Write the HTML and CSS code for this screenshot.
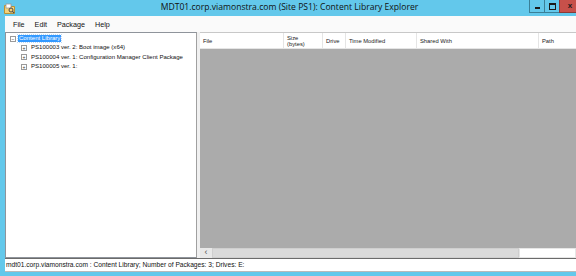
FILE: index.html
```html
<!DOCTYPE html>
<html>
<head>
<meta charset="utf-8">
<link rel="stylesheet" href="styles.css">
</head>
<body>
<div class="window">
  <div class="titlebar">
    <div class="appicon">
      <svg width="11" height="11" viewBox="0 0 11 11">
        <path d="M0.5 2.5 H4 L5 3.5 H10.5 V10.5 H0.5 Z" fill="#f3d27a" stroke="#b89236" stroke-width="1"/>
        <rect x="2" y="1" width="5" height="4" fill="#fff" stroke="#9a9a9a" stroke-width="0.8"/>
        <circle cx="7" cy="7" r="2" fill="none" stroke="#4a4a4a" stroke-width="1"/>
        <path d="M8.4 8.4 L10.2 10.2" stroke="#4a4a4a" stroke-width="1.2"/>
      </svg>
    </div>
    <div class="title">MDT01.corp.viamonstra.com (Site PS1): Content Library Explorer</div>
    <div class="caption-buttons">
      <div class="cbtn"><span class="min-glyph"></span></div>
      <div class="cbtn"><span class="max-glyph"></span></div>
      <div class="cbtn close"><span class="x-glyph">x</span></div>
    </div>
  </div>
  <div class="client">
    <div class="menubar">
      <span class="menu">File</span>
      <span class="menu">Edit</span>
      <span class="menu">Package</span>
      <span class="menu">Help</span>
    </div>
    <div class="main">
      <div class="tree">
        <div class="node root">
          <span class="exp">−</span><span class="label selected">Content Library</span>
        </div>
        <div class="node child">
          <span class="exp">+</span><span class="label">PS100003 ver. 2: Boot image (x64)</span>
        </div>
        <div class="node child">
          <span class="exp">+</span><span class="label">PS100004 ver. 1: Configuration Manager Client Package</span>
        </div>
        <div class="node child">
          <span class="exp">+</span><span class="label">PS100005 ver. 1:</span>
        </div>
      </div>
      <div class="splitter"></div>
      <div class="list">
        <div class="header">
          <div class="col c-file">File</div>
          <div class="col c-size">Size<br>(bytes)</div>
          <div class="col c-drive">Drive</div>
          <div class="col c-time">Time Modified</div>
          <div class="col c-shared">Shared With</div>
          <div class="col c-path">Path</div>
        </div>
        <div class="listbody"></div>
        <div class="hscroll">
          <div class="arrow">&lsaquo;</div>
          <div class="track"></div>
          <div class="rest"></div>
        </div>
      </div>
    </div>
    <div class="statusbar">mdt01.corp.viamonstra.com : Content Library; Number of Packages: 3; Drives: E:</div>
  </div>
</div>
</body>
</html>
```
FILE: styles.css
```css
html, body {
  margin: 0;
  padding: 0;
  width: 576px;
  height: 276px;
  overflow: hidden;
}
.window {
  width: 576px;
  height: 276px;
  background: #63c8eb;
  display: flex;
  flex-direction: column;
  padding-bottom: 4px;
  box-sizing: border-box;
  font-family: "Liberation Sans", Arial, sans-serif;
}
.titlebar {
  height: 16px;
  display: flex;
  align-items: flex-start;
  position: relative;
}
.appicon {
  width: 11px;
  height: 11px;
  margin: 3px 0 0 4px;
}
.appicon svg { display: block; }
.title {
  position: absolute;
  left: 0;
  right: 0;
  top: 2px;
  text-align: center;
  font-family: "Open Sans", "Noto Sans", sans-serif;
  font-size: 8.6px;
  line-height: 11px;
  color: #111;
  padding-left: 3px;
}
.caption-buttons {
  margin-left: auto;
  display: flex;
  height: 13px;
  position: relative;
  z-index: 1;
}
.cbtn {
  width: 15px;
  height: 13px;
  border-left: 1px solid #3a7f97;
  border-bottom: 1px solid #3a7f97;
  box-sizing: border-box;
  display: flex;
  align-items: center;
  justify-content: center;
}
.cbtn.close {
  width: 17px;
  background: #c7504a;
  border-color: #8b3a36;
}
.min-glyph {
  width: 5px;
  height: 2px;
  background: #1a1a1a;
  margin-top: 3px;
}
.max-glyph {
  width: 5px;
  height: 4px;
  border: 1px solid #1a1a1a;
  border-top-width: 2px;
}
.x-glyph {
  font-size: 8px;
  font-weight: bold;
  color: #1a1a1a;
  line-height: 8px;
  margin-left: 4px;
}
.client {
  flex: 1;
  margin-left: 5px;
  display: flex;
  flex-direction: column;
  background: #f0f0f0;
  min-height: 0;
}
.menubar {
  height: 16px;
  background: #fafafa;
  display: flex;
  align-items: center;
  padding-left: 8px;
  font-size: 7.2px;
  color: #111;
  box-sizing: border-box;
  padding-top: 1px;
}
.menu { margin-right: 10px; }
.main {
  flex: 1;
  display: flex;
  min-height: 0;
}
.tree {
  width: 192px;
  background: #fff;
  border: 1px solid #8f949b;
  border-right-color: #a0a0a0;
  box-sizing: border-box;
  padding-top: 1px;
  font-size: 6.05px;
  color: #111;
}
.node {
  height: 9.3px;
  display: flex;
  align-items: center;
  white-space: nowrap;
}
.exp {
  width: 4px;
  height: 4px;
  border: 1px solid #9a9a9a;
  font-size: 5px;
  line-height: 4px;
  text-align: center;
  color: #333;
  margin-right: 2px;
  flex: none;
}
.root { padding-left: 4px; }
.child { padding-left: 15px; }
.child .exp { margin-right: 3px; }
.label { padding: 0 1px; line-height: 7px; }
.selected {
  background: #3399ff;
  color: #fff;
  outline: 1px dotted #c0d8f0;
}
.splitter {
  width: 3px;
  background: #f0f0f0;
}
.list {
  flex: 1;
  display: flex;
  flex-direction: column;
  min-width: 0;
  border-top: 1px solid #c8c8c8;
}
.header {
  height: 15px;
  background: #fff;
  display: flex;
  border-bottom: 1px solid #e5e5e5;
  font-size: 5.8px;
  color: #222;
}
.col {
  box-sizing: border-box;
  border-right: 1px solid #e5e5e5;
  padding-left: 3px;
  display: flex;
  align-items: center;
  line-height: 6px;
}
.c-file { width: 84px; }
.c-size { width: 39px; }
.c-drive { width: 23px; }
.c-time { width: 71px; }
.c-shared { width: 122px; }
.c-path { flex: 1; border-right: none; }
.listbody {
  flex: 1;
  background: #ababab;
}
.hscroll {
  height: 10px;
  display: flex;
  background: #e6e6e6;
}
.arrow {
  width: 12px;
  font-size: 9px;
  line-height: 9px;
  color: #555;
  text-align: center;
  background: #e8e8e8;
}
.track {
  width: 307px;
  background: #dadada;
  border: 1px solid #cfcfcf;
  box-sizing: border-box;
}
.rest {
  flex: 1;
  background: #fff;
  margin: 1px;
}
.statusbar {
  height: 14px;
  background: #fff;
  border-top: 1px solid #6b6b6b;
  border-bottom: 1px solid #b9b9b9;
  box-sizing: border-box;
  font-size: 6.65px;
  line-height: 12px;
  padding-left: 1px;
  color: #111;
  white-space: nowrap;
}
```
